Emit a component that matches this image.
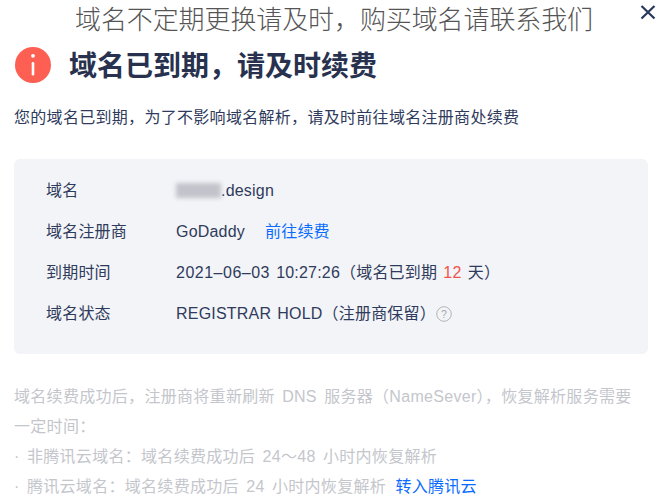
<!-- Domain expired notice dialog -->
<script lang="ts">
  const rows = [
    { label: '域名' },
    { label: '域名注册商' },
    { label: '到期时间' },
    { label: '域名状态' }
  ];
</script>

<div class="dialog">
  <p class="notice">域名不定期更换请及时&#xFF0C;购买域名请联系我们</p>
  <button class="close" aria-label="关闭">
    <svg width="16" height="16" viewBox="0 0 16 16">
      <path d="M1.5 2 L14.5 14.5 M14.5 2 L1.5 14.5" stroke="#27365c" stroke-width="2.2" fill="none" />
    </svg>
  </button>

  <div class="heading">
    <svg class="alert" width="36" height="36" viewBox="0 0 36 36">
      <circle cx="18" cy="18" r="18" fill="#fd5f52" />
      <circle cx="18" cy="8.8" r="1.9" fill="#fff" />
      <rect x="16.7" y="15" width="2.6" height="13.5" rx="1.3" fill="#fff" />
    </svg>
    <h1>域名已到期&#xFF0C;请及时续费</h1>
  </div>

  <p class="desc">您的域名已到期&#xFF0C;为了不影响域名解析&#xFF0C;请及时前往域名注册商处续费</p>

  <div class="info">
    <div class="row">
      <span class="label">{rows[0].label}</span>
      <span class="value"><span class="mask"></span>.design</span>
    </div>
    <div class="row">
      <span class="label">{rows[1].label}</span>
      <span class="value">GoDaddy<a class="renew" href="#renew">前往续费</a></span>
    </div>
    <div class="row">
      <span class="label">{rows[2].label}</span>
      <span class="value"><span class="date">2021–06–03</span> 10:27:26&#xFF08;域名已到期 <em>12</em> 天&#xFF09;</span>
    </div>
    <div class="row">
      <span class="label">{rows[3].label}</span>
      <span class="value">REGISTRAR HOLD&#xFF08;注册商保留&#xFF09;<svg class="help" width="16" height="16" viewBox="0 0 16 16">
          <circle cx="8" cy="8" r="7.3" fill="none" stroke="#b4b4b4" stroke-width="1" />
          <text x="8" y="11.6" text-anchor="middle" font-size="10.5" fill="#a8a8a8">?</text>
        </svg></span>
    </div>
  </div>

  <div class="tips">
    <p>域名续费成功后&#xFF0C;注册商将重新刷新 DNS 服务器&#xFF08;NameSever&#xFF09;&#xFF0C;恢复解析服务需要一定时间&#xFF1A;</p>
    <p>· 非腾讯云域名&#xFF1A;域名续费成功后 24&#xFF5E;48 小时内恢复解析</p>
    <p>· 腾讯云域名&#xFF1A;域名续费成功后 24 小时内恢复解析 <a href="#transfer">转入腾讯云</a></p>
  </div>
</div>

<style>
  :global(body) {
    margin: 0;
    background: #fff;
  }

  .dialog {
    position: relative;
    height: 500px;
    overflow: hidden;
    padding: 0 16px 0 14px;
    box-sizing: border-box;
    font-family: "Liberation Sans", "Noto Sans CJK SC", sans-serif;
    color: #2f3b5c;
  }

  .notice {
    margin: 0 0 0 61px;
    height: 40px;
    font-size: 26px;
    line-height: 40px;
    font-weight: 200;
    letter-spacing: -0.1px;
    color: #555;
    white-space: nowrap;
  }

  .close {
    position: absolute;
    top: 4px;
    right: 8px;
    padding: 0;
    border: 0;
    background: none;
    line-height: 0;
  }

  .heading {
    display: flex;
    align-items: center;
    gap: 18px;
    height: 50px;
    padding-left: 1px;
  }

  .alert {
    flex: none;
  }

  h1 {
    margin: 4px 0 0;
    font-size: 28px;
    line-height: 46px;
    font-weight: 700;
    color: #28324f;
    white-space: nowrap;
  }

  .desc {
    margin: 17px 0 0;
    font-size: 16px;
    line-height: 22px;
    letter-spacing: 0.3px;
    white-space: nowrap;
  }

  .info {
    margin-top: 30px;
    padding: 11px 32px 20px;
    background: #f3f4f7;
    border-radius: 6px;
  }

  .row {
    display: flex;
    height: 41px;
    align-items: center;
    font-size: 16px;
    line-height: 24px;
    letter-spacing: 0.2px;
    word-spacing: 1.5px;
    color: #2f3b5c;
    white-space: nowrap;
  }

  .label {
    width: 130px;
    flex: none;
  }

  .value {
    white-space: pre;
  }

  .date {
    letter-spacing: 0.5px;
  }

  .mask {
    display: inline-block;
    width: 45px;
    height: 15px;
    vertical-align: -2px;
    background: #c3c4cb;
    filter: blur(2px);
  }

  .renew {
    margin-left: 20px;
  }

  a {
    color: #0a6cff;
    text-decoration: none;
  }

  em {
    font-style: normal;
    color: #f4524d;
  }

  .help {
    margin-left: 0;
    vertical-align: -3px;
  }

  .tips {
    margin-top: 28px;
    padding-right: 8px;
    font-size: 16px;
    line-height: 30px;
    letter-spacing: 0.3px;
    word-spacing: 2.6px;
    color: #c4c6cc;
  }

  .tips p {
    margin: 0;
  }

  .tips a {
    margin-left: 2px;
  }
</style>
